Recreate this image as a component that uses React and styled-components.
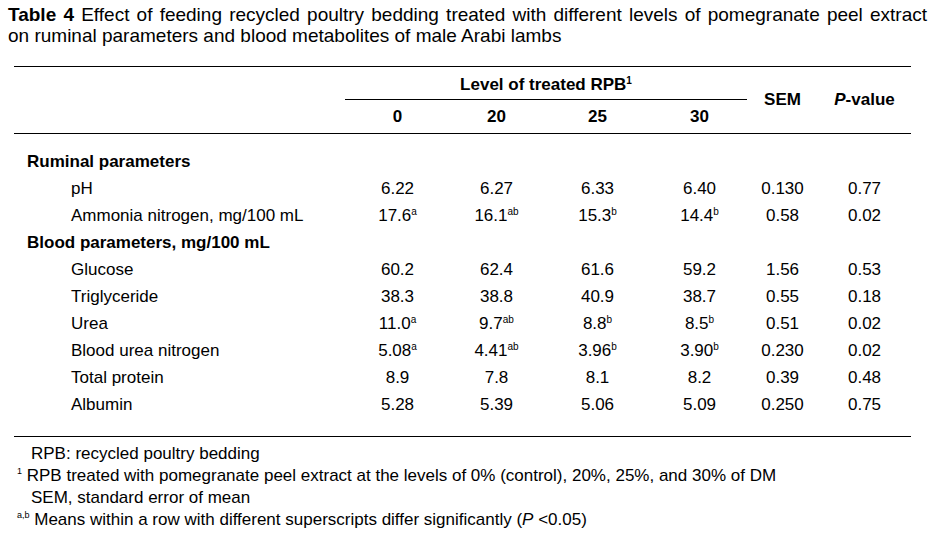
import React from "react";
import styled, { createGlobalStyle } from "styled-components";

const GlobalStyle = createGlobalStyle`
  body {
    margin: 0;
    background: #fff;
    color: #000;
    font-family: "Liberation Sans", Arial, sans-serif;
  }
`;

const Page = styled.div`
  width: 931px;
  padding-top: 4px;
`;

const Caption = styled.p`
  margin: 0 4px 0 8px;
  font-size: 19px;
  line-height: 21px;
`;

// first caption line is justified to the full width, as in the source
const CaptionLine = styled.span`
  display: block;
  text-align: ${(p) => (p.$full ? "justify" : "left")};
  text-align-last: ${(p) => (p.$full ? "justify" : "left")};
  white-space: nowrap;
`;

const Table = styled.table`
  margin: 20px 0 0 14px;
  width: 897px;
  border-collapse: collapse;
  table-layout: fixed;
  font-size: 17px;
  border-top: 1px solid #000;
  border-bottom: 1px solid #000;
`;

const Col = styled.col`
  width: ${(p) => p.$w}px;
`;

const Head = styled.thead`
  border-bottom: 1px solid #000;
`;

const HeadRow = styled.tr`
  height: ${(p) => p.$h}px;
`;

const HeadCell = styled.th`
  padding: ${(p) => p.$pt || 0}px 0 0;
  font-weight: 700;
  text-align: center;
  vertical-align: middle;
  border-bottom: ${(p) => (p.$rule ? "1px solid #000" : "none")};
`;

const Row = styled.tr`
  height: 27px;
`;

const GapCell = styled.td`
  padding: 0;
  height: ${(p) => p.$h}px;
`;

const Label = styled.td`
  padding: 0 0 0 ${(p) => (p.$section ? 13 : 57)}px;
  font-weight: ${(p) => (p.$section ? 700 : 400)};
  white-space: nowrap;
`;

const Cell = styled.td`
  padding: 0;
  text-align: center;
`;

const Sup = styled.sup`
  font-size: 10px;
  line-height: 0;
  vertical-align: 6px;
`;

const Notes = styled.div`
  margin: 6px 0 0 14px;
  font-size: 17px;
  line-height: 22px;
`;

const Note = styled.div`
  padding-left: ${(p) => (p.$marked ? 3 : 17)}px;
  white-space: nowrap;
`;

const Mark = styled.sup`
  font-size: 9px;
  line-height: 0;
  vertical-align: 7px;
`;

const rows = [
  { section: "Ruminal parameters" },
  { label: "pH", v: [["6.22"], ["6.27"], ["6.33"], ["6.40"]], sem: "0.130", p: "0.77" },
  {
    label: "Ammonia nitrogen, mg/100 mL",
    v: [["17.6", "a"], ["16.1", "ab"], ["15.3", "b"], ["14.4", "b"]],
    sem: "0.58",
    p: "0.02",
  },
  { section: "Blood parameters, mg/100 mL" },
  { label: "Glucose", v: [["60.2"], ["62.4"], ["61.6"], ["59.2"]], sem: "1.56", p: "0.53" },
  { label: "Triglyceride", v: [["38.3"], ["38.8"], ["40.9"], ["38.7"]], sem: "0.55", p: "0.18" },
  {
    label: "Urea",
    v: [["11.0", "a"], ["9.7", "ab"], ["8.8", "b"], ["8.5", "b"]],
    sem: "0.51",
    p: "0.02",
  },
  {
    label: "Blood urea nitrogen",
    v: [["5.08", "a"], ["4.41", "ab"], ["3.96", "b"], ["3.90", "b"]],
    sem: "0.230",
    p: "0.02",
  },
  { label: "Total protein", v: [["8.9"], ["7.8"], ["8.1"], ["8.2"]], sem: "0.39", p: "0.48" },
  { label: "Albumin", v: [["5.28"], ["5.39"], ["5.06"], ["5.09"]], sem: "0.250", p: "0.75" },
];

const Gap = ({ h }) => (
  <tr>
    <GapCell colSpan={7} $h={h} />
  </tr>
);

export default function App() {
  return (
    <Page>
      <GlobalStyle />
      <Caption>
        <CaptionLine $full>
          <b>Table 4</b> Effect of feeding recycled poultry bedding treated with different levels of pomegranate peel extract
        </CaptionLine>
        <CaptionLine>on ruminal parameters and blood metabolites of male Arabi lambs</CaptionLine>
      </Caption>

      <Table>
        <colgroup>
          <Col $w={331} />
          <Col $w={105} />
          <Col $w={93} />
          <Col $w={109} />
          <Col $w={95} />
          <Col $w={71} />
          <Col $w={93} />
        </colgroup>
        <Head>
          <HeadRow $h={33}>
            <HeadCell rowSpan={2} />
            <HeadCell colSpan={4} $rule $pt={3}>
              Level of treated RPB<Sup>1</Sup>
            </HeadCell>
            <HeadCell rowSpan={2}>SEM</HeadCell>
            <HeadCell rowSpan={2}>
              <i>P</i>-value
            </HeadCell>
          </HeadRow>
          <HeadRow $h={34}>
            <HeadCell>0</HeadCell>
            <HeadCell>20</HeadCell>
            <HeadCell>25</HeadCell>
            <HeadCell>30</HeadCell>
          </HeadRow>
        </Head>
        <tbody>
          <Gap h={14} />
          {rows.map((r, i) =>
            r.section ? (
              <Row key={i}>
                <Label $section colSpan={7}>
                  {r.section}
                </Label>
              </Row>
            ) : (
              <Row key={i}>
                <Label>{r.label}</Label>
                {r.v.map(([n, s], j) => (
                  <Cell key={j}>
                    {n}
                    {s && <Sup>{s}</Sup>}
                  </Cell>
                ))}
                <Cell>{r.sem}</Cell>
                <Cell>{r.p}</Cell>
              </Row>
            )
          )}
          <Gap h={18} />
        </tbody>
      </Table>

      <Notes>
        <Note>RPB: recycled poultry bedding</Note>
        <Note $marked>
          <Mark>1</Mark> RPB treated with pomegranate peel extract at the levels of 0% (control), 20%, 25%, and 30% of DM
        </Note>
        <Note>SEM, standard error of mean</Note>
        <Note $marked>
          <Mark>a,b</Mark> Means within a row with different superscripts differ significantly (<i>P</i> &lt;0.05)
        </Note>
      </Notes>
    </Page>
  );
}
